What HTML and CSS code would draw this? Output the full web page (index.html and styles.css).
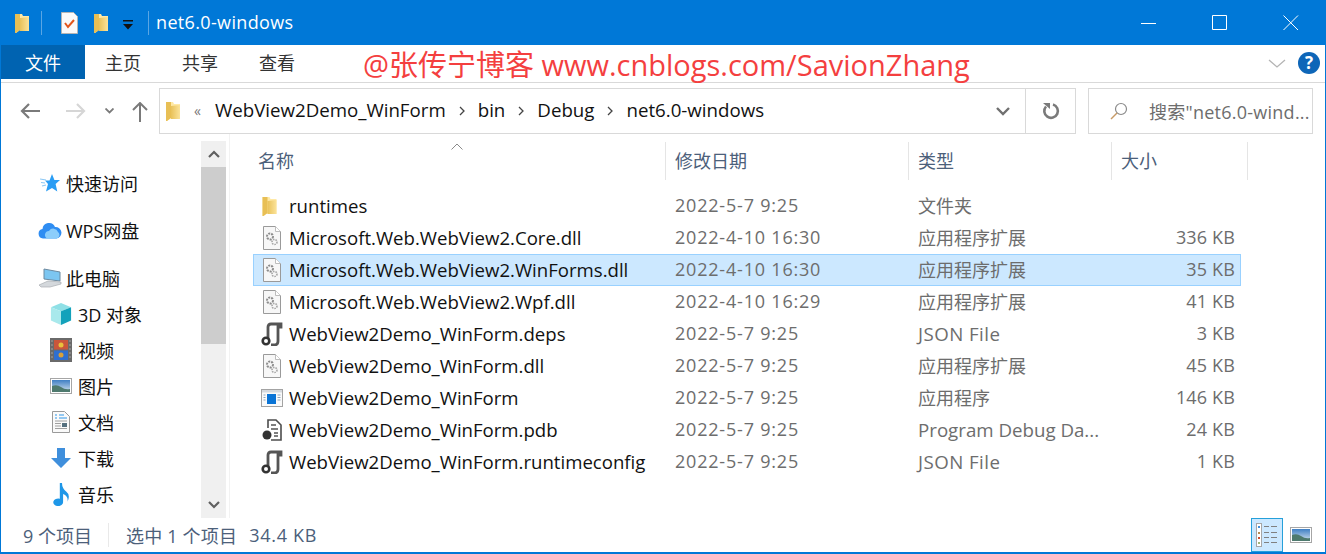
FILE: index.html
```html
<!DOCTYPE html>
<html lang="zh-CN">
<head>
    <meta charset="UTF-8">
    <title>net6.0-windows</title>
    <link rel="stylesheet" href="styles.css">
</head>
<body>
    <svg class="defs" width="0" height="0">
        <defs>
            <linearGradient id="fold" x1="0" y1="0" x2="1" y2="0">
                <stop offset="0" stop-color="#e9c25a"/>
                <stop offset="1" stop-color="#fbe39a"/>
            </linearGradient>
            <symbol id="folder" viewBox="0 0 14 20">
                <path d="M0 1h7l1 2h6v15H5v-1l-4 3H0z" fill="#ffe9a6"/>
                <path d="M0 1h5v16l-4 3H0z" fill="#e8bf55"/>
                <path d="M5 5l9-1v14H5z" fill="url(#fold)"/>
            </symbol>
            <symbol id="dll" viewBox="0 0 18 24">
                <path d="M.5.5h12l5 5v18H.5z" fill="#f7f7f7" stroke="#9a9a9a"/>
                <path d="M12.5.5v5h5" fill="#fff" stroke="#bdbdbd"/>
                <circle cx="7" cy="10.500" r="3" fill="none" stroke="#8c8c8c" stroke-width="2" stroke-dasharray="2 1"/>
                <circle cx="11.500" cy="16" r="2.500" fill="none" stroke="#a5a5a5" stroke-width="1.600" stroke-dasharray="1.500 1"/>
            </symbol>
            <symbol id="cfg" viewBox="0 0 22 24">
                <path d="M7 18V5q0-3 3-3h10v3h-3v14q0 4-4 4h-3" fill="none" stroke="#555" stroke-width="2.800"/>
                <circle cx="5" cy="19" r="3.300" fill="#fff" stroke="#333" stroke-width="2.600"/>
            </symbol>
            <symbol id="exe" viewBox="0 0 22 18">
                <rect x=".5" y=".5" width="21" height="17" fill="#fafafa" stroke="#a3a3a3"/>
                <rect x="1" y="1" width="20" height="2.500" fill="#d5d9de"/>
                <rect x="6" y="5" width="9" height="10" fill="#0a74d6"/>
                <path d="M2.500 6h2M2.500 8.500h2M2.500 11h2M16.500 6h3M16.500 8.500h3M16.500 11h3" stroke="#8fa5bb"/>
            </symbol>
            <symbol id="pdb" viewBox="0 0 20 22">
                <path d="M6 9V1h8l5 5v15H9" fill="#fff" stroke="#4d4d4d" stroke-width="1.600"/>
                <path d="M9 6h5M9 10h7M12 14h4M12 17h4" stroke="#555" stroke-width="1.500"/>
                <circle cx="5" cy="16" r="4.500" fill="#333"/>
            </symbol>
            <symbol id="star" viewBox="0 0 20 18">
                <path d="M12 0l2.400 6H20l-4.400 4 1.700 7.500L12 14l-6 3.500 2-7.500-3-3.500h4.500z" fill="#2a9df4"/>
                <path d="M0 5l6 1M1 8.500l4 .5M2 12l4-1" stroke="#8cc8f5" stroke-width="1.200"/>
            </symbol>
            <symbol id="cloud" viewBox="0 0 24 17">
                <path d="M5 16.500a4.800 4.800 0 0 1-.5-9.500A6.500 6.500 0 0 1 17 5a5.800 5.800 0 0 1 1.500 11.500z" fill="#2f8df2"/>
                <path d="M9 16.500a4 4 0 0 1 2-7.500 5 5 0 0 1 9 1 3.800 3.800 0 0 1-1 6.500z" fill="#8ccdfb"/>
            </symbol>
            <symbol id="pc" viewBox="0 0 24 20">
                <path d="M6 1l16 3v9L6 11z" fill="#7cc6f1" stroke="#6d8aa0"/>
                <path d="M1 17l9-4 13 1v2l-11 3H3z" fill="#d4d8dc" stroke="#a9adb1" stroke-width=".7"/>
            </symbol>
            <symbol id="cube" viewBox="0 0 24 24">
                <path d="M12 0l11 4.500L12 9 1 4.500z" fill="#8fe0e6"/>
                <path d="M1 4.500L12 9v15L1 19z" fill="#a9e9ec"/>
                <path d="M23 4.500L12 9v15l11-5z" fill="#13a2bb"/>
            </symbol>
            <symbol id="film" viewBox="0 0 22 24">
                <rect width="22" height="24" fill="#6a6a6a"/>
                <rect x="4" y="2" width="14" height="9.500" fill="#c9563b"/>
                <rect x="4" y="12.500" width="14" height="9.500" fill="#2f6fd0"/>
                <path d="M1.500 3h1M1.500 7h1M1.500 11h1M1.500 15h1M1.500 19h1M19.500 3h1M19.500 7h1M19.500 11h1M19.500 15h1M19.500 19h1" stroke="#ddd"/>
                <circle cx="11" cy="7" r="2.500" fill="#e8c13d"/>
                <circle cx="11" cy="17" r="2.500" fill="#d8a03a"/>
            </symbol>
            <linearGradient id="sky" x1="0" y1="0" x2="0" y2="1">
                <stop offset="0" stop-color="#3f7fc4"/>
                <stop offset="1" stop-color="#d4e3ee"/>
            </linearGradient>
            <symbol id="pic" viewBox="0 0 22 16">
                <rect x=".5" y=".5" width="21" height="15" fill="#fff" stroke="#a6a6a6"/>
                <rect x="2" y="2" width="18" height="12" fill="url(#sky)"/>
                <path d="M2 8q5-2 9 1t9 2v3H2z" fill="#4e7a6e"/>
            </symbol>
            <symbol id="doc" viewBox="0 0 18 22">
                <path d="M.5.5h12l5 5v16H.5z" fill="#fafafa" stroke="#9a9a9a"/>
                <path d="M3 4h2M3 7h2M7 4h5M7 7h8" stroke="#2f96e8" stroke-width="1.200"/>
                <path d="M3 10h12M3 12.500h6M3 15h6M3 17.500h12" stroke="#a0a0a0"/>
                <rect x="10" y="12" width="5" height="4" fill="#55707f"/>
            </symbol>
            <symbol id="down" viewBox="0 0 20 20">
                <path d="M6 0h8v10h6L10 20 0 10h6z" fill="#3f8fdc"/>
            </symbol>
            <symbol id="note" viewBox="0 0 16 22">
                <path d="M6 1h2q0 5 4 8t1 9q1-5-4-7v7.500a4.500 3.500 0 1 1-3-3.200z" fill="#1e97e8"/>
            </symbol>
        </defs>
    </svg>

    <div class="window">
        <div class="titlebar">
            <svg class="ic-folder"><use href="#folder"/></svg>
            <span class="tb-sep first"></span>
            <svg class="ic-check" viewBox="0 0 17 22">
                <path d="M.5.500h12l4 4v17H.5z" fill="#fafafa" stroke="#b5b5b5"/>
                <path d="M4 11l3 4 6-7" fill="none" stroke="#e2561c" stroke-width="2"/>
            </svg>
            <svg class="ic-folder second"><use href="#folder"/></svg>
            <svg class="ic-qa" viewBox="0 0 10 10">
                <path d="M0 0h10v1.500H0zM0 4h10L5 9.500z" fill="#111"/>
            </svg>
            <span class="tb-sep"></span>
            <span class="title">net6.0-windows</span>
            <div class="win-btns">
                <svg viewBox="0 0 16 16"><path d="M0 8.500h15" stroke="#fff"/></svg>
                <svg viewBox="0 0 16 16"><path d="M.5 .5h14v14H.5z" fill="none" stroke="#fff"/></svg>
                <svg viewBox="0 0 16 16"><path d="M.5 .5l14.500 14.500M15 .5L.5 15" stroke="#fff"/></svg>
            </div>
        </div>

        <div class="ribbon">
            <span class="tab tab-file">文件</span>
            <span class="tab">主页</span>
            <span class="tab">共享</span>
            <span class="tab">查看</span>
            <span class="mark">@张传宁博客 www.cnblogs.com/SavionZhang</span>
            <svg class="rb-chevron" viewBox="0 0 18 10"><path d="M1 1l8 7 8-7" fill="none" stroke="#b4b4b4" stroke-width="1.300"/></svg>
            <span class="help">?</span>
        </div>

        <div class="navbar">
            <svg class="nav back" viewBox="0 0 20 16"><path d="M9 1L2 8l7 7M2 8h18" fill="none" stroke="#7a7a7a" stroke-width="2.200"/></svg>
            <svg class="nav fwd" viewBox="0 0 20 16"><path d="M11 1l7 7-7 7M18 8H0" fill="none" stroke="#d6d6d6" stroke-width="2.200"/></svg>
            <svg class="nav recent" viewBox="0 0 9 6"><path d="M.5.500L4.500 4.500 8.500.500" fill="none" stroke="#7a7a7a" stroke-width="1.800"/></svg>
            <svg class="nav up" viewBox="0 0 16 20"><path d="M1 8l7-7 7 7M8 1v19" fill="none" stroke="#7a7a7a" stroke-width="2"/></svg>
            <div class="addr">
                <svg class="ic-folder"><use href="#folder"/></svg>
                <span class="crumb-more">«</span>
                <span class="crumb">WebView2Demo_WinForm</span>
                <svg class="crumb-sep" viewBox="0 0 6 10"><path d="M1 1l4 4-4 4" fill="none" stroke="#444" stroke-width="1.300"/></svg>
                <span class="crumb">bin</span>
                <svg class="crumb-sep" viewBox="0 0 6 10"><path d="M1 1l4 4-4 4" fill="none" stroke="#444" stroke-width="1.300"/></svg>
                <span class="crumb">Debug</span>
                <svg class="crumb-sep" viewBox="0 0 6 10"><path d="M1 1l4 4-4 4" fill="none" stroke="#444" stroke-width="1.300"/></svg>
                <span class="crumb">net6.0-windows</span>
                <svg class="addr-drop" viewBox="0 0 14 9"><path d="M1 1l6 6 6-6" fill="none" stroke="#707070" stroke-width="2.400"/></svg>
                <span class="addr-refresh">
                    <svg viewBox="0 0 18 18"><path d="M11 2.500A6.800 6.800 0 1 1 4 4.500" fill="none" stroke="#7a7a7a" stroke-width="2.600"/><path d="M1 1h7v6z" fill="#7a7a7a"/></svg>
                </span>
            </div>
            <div class="search">
                <svg viewBox="0 0 18 18"><circle cx="11" cy="7" r="5.500" fill="none" stroke="#8a8a8a" stroke-width="1.200"/><path d="M7 11l-6 6" stroke="#c79a66" stroke-width="1.500"/></svg>
                <span>搜索"net6.0-wind...</span>
            </div>
        </div>

        <div class="main">
            <div class="side">
                <div class="tree">
                    <div class="node top first-node"><svg class="i-star"><use href="#star"/></svg>快速访问</div>
                    <div class="node top gap"><svg class="i-cloud"><use href="#cloud"/></svg>WPS网盘</div>
                    <div class="node top gap wide"><svg class="i-pc"><use href="#pc"/></svg>此电脑</div>
                    <div class="node sub"><svg class="i-24"><use href="#cube"/></svg>3D 对象</div>
                    <div class="node sub"><svg class="i-24"><use href="#film"/></svg>视频</div>
                    <div class="node sub"><svg class="i-pic"><use href="#pic"/></svg>图片</div>
                    <div class="node sub"><svg class="i-doc"><use href="#doc"/></svg>文档</div>
                    <div class="node sub"><svg class="i-down"><use href="#down"/></svg>下载</div>
                    <div class="node sub"><svg class="i-note"><use href="#note"/></svg>音乐</div>
                </div>
                <div class="scroll">
                    <span class="sc-btn"><svg viewBox="0 0 12 8"><path d="M1 7l5-5 5 5" fill="none" stroke="#606060" stroke-width="2.200"/></svg></span>
                    <span class="sc-thumb"></span>
                    <span class="sc-btn end"><svg viewBox="0 0 12 8"><path d="M1 1l5 5 5-5" fill="none" stroke="#606060" stroke-width="2.200"/></svg></span>
                </div>
            </div>

            <div class="files">
                <div class="head">
                    <span class="col-name">名称<svg class="sort" viewBox="0 0 12 7"><path d="M.5 6.500L6 1l5.500 5.500" fill="none" stroke="#8a8a8a"/></svg></span>
                    <span class="col-date">修改日期</span>
                    <span class="col-type">类型</span>
                    <span class="col-size">大小</span>
                </div>
                <div class="row">
                    <span class="col-name"><span class="f-ic"><svg class="i-fold"><use href="#folder"/></svg></span>runtimes</span>
                    <span class="col-date">2022-5-7 9:25</span><span class="col-type">文件夹</span><span class="col-size"></span>
                </div>
                <div class="row">
                    <span class="col-name"><span class="f-ic"><svg class="i-dll"><use href="#dll"/></svg></span>Microsoft.Web.WebView2.Core.dll</span>
                    <span class="col-date">2022-4-10 16:30</span><span class="col-type">应用程序扩展</span><span class="col-size">336 KB</span>
                </div>
                <div class="row selected">
                    <span class="col-name"><span class="f-ic"><svg class="i-dll"><use href="#dll"/></svg></span>Microsoft.Web.WebView2.WinForms.dll</span>
                    <span class="col-date">2022-4-10 16:30</span><span class="col-type">应用程序扩展</span><span class="col-size">35 KB</span>
                </div>
                <div class="row">
                    <span class="col-name"><span class="f-ic"><svg class="i-dll"><use href="#dll"/></svg></span>Microsoft.Web.WebView2.Wpf.dll</span>
                    <span class="col-date">2022-4-10 16:29</span><span class="col-type">应用程序扩展</span><span class="col-size">41 KB</span>
                </div>
                <div class="row">
                    <span class="col-name"><span class="f-ic"><svg class="i-cfg"><use href="#cfg"/></svg></span>WebView2Demo_WinForm.deps</span>
                    <span class="col-date">2022-5-7 9:25</span><span class="col-type latin json">JSON File</span><span class="col-size">3 KB</span>
                </div>
                <div class="row">
                    <span class="col-name"><span class="f-ic"><svg class="i-dll"><use href="#dll"/></svg></span>WebView2Demo_WinForm.dll</span>
                    <span class="col-date">2022-5-7 9:25</span><span class="col-type">应用程序扩展</span><span class="col-size">45 KB</span>
                </div>
                <div class="row">
                    <span class="col-name"><span class="f-ic"><svg class="i-exe"><use href="#exe"/></svg></span>WebView2Demo_WinForm</span>
                    <span class="col-date">2022-5-7 9:25</span><span class="col-type">应用程序</span><span class="col-size">146 KB</span>
                </div>
                <div class="row">
                    <span class="col-name"><span class="f-ic"><svg class="i-pdb"><use href="#pdb"/></svg></span>WebView2Demo_WinForm.pdb</span>
                    <span class="col-date">2022-5-7 9:25</span><span class="col-type latin">Program Debug Da...</span><span class="col-size">24 KB</span>
                </div>
                <div class="row">
                    <span class="col-name"><span class="f-ic"><svg class="i-cfg"><use href="#cfg"/></svg></span>WebView2Demo_WinForm.runtimeconfig</span>
                    <span class="col-date">2022-5-7 9:25</span><span class="col-type latin json">JSON File</span><span class="col-size">1 KB</span>
                </div>
            </div>
        </div>

        <div class="status">
            <span class="st-count">9 个项目</span>
            <span class="st-sep"></span>
            <span class="st-sel">选中 1 个项目</span>
            <span class="st-size">34.4 KB</span>
            <div class="views">
                <span class="view active">
                    <svg viewBox="0 0 22 24">
                        <rect x=".5" y=".5" width="5" height="23" fill="#fff" stroke="#a6a6a6"/>
                        <path d="M2 3h2v2H2z" fill="#3f8fdc"/><path d="M2 9h2v2H2z" fill="#b58a55"/><path d="M2 14h2v2H2z" fill="#d24a2c"/><path d="M2 19h2v2H2z" fill="#9fb37a"/>
                        <path d="M8 3.500h5M15 3.500h6M8 9.500h5M15 9.500h6M8 14.500h5M15 14.500h6M8 19.500h5M15 19.500h6" stroke="#808080" stroke-width="1.200"/>
                    </svg>
                </span>
                <svg class="view-large"><use href="#pic"/></svg>
            </div>
        </div>
    </div>
</body>
</html>
```

FILE: styles.css
```css
* {
    box-sizing: border-box;
}
body {
    margin: 0;
    background: #fff;
    font-family: "Open Sans", "Noto Sans CJK SC", sans-serif;
    font-size: 18px;
    color: #111;
}
svg {
    display: block;
    flex: none;
}
.defs {
    position: absolute;
}
.window {
    width: 1326px;
    height: 554px;
    display: flex;
    flex-direction: column;
    border-left: 1px solid #0078d7;
    border-right: 1px solid #0078d7;
    border-bottom: 2px solid #0078d7;
    overflow: hidden;
}

/* title bar */
.titlebar {
    height: 45px;
    flex: none;
    margin-left: -1px;
    background: #0078d7;
    display: flex;
    align-items: center;
    color: #fff;
}
.ic-folder {
    width: 14px;
    height: 20px;
    margin-left: 15px;
}
.ic-folder.second {
    margin-left: 16px;
}
.tb-sep {
    width: 1px;
    height: 24px;
    margin-left: 15px;
    background: #5aa6e4;
}
.tb-sep.first {
    margin-left: 12px;
}
.ic-check {
    width: 17px;
    height: 22px;
    margin-left: 19px;
}
.ic-qa {
    width: 10px;
    height: 10px;
    margin: 4px 0 0 15px;
}
.title {
    margin: -2px 0 0 7px;
    letter-spacing: .35px;
}
.win-btns {
    margin-left: auto;
    display: flex;
    gap: 55px;
    padding-right: 26px;
}
.win-btns svg {
    width: 16px;
    height: 16px;
}

/* ribbon */
.ribbon {
    height: 38px;
    flex: none;
    display: flex;
    align-items: flex-start;
    border-bottom: 1px solid #d9d9d9;
}
.tab {
    height: 34px;
    margin-right: 41px;
    line-height: 36px;
    color: #333;
}
.tab:nth-child(2) {
    margin-left: 20px;
}
.tab-file {
    width: 84px;
    margin: 0;
    text-align: center;
    background: #0063b1;
    color: #fff;
}
.mark {
    margin-left: 27px;
    height: 34px;
    line-height: 40px;
    font-size: 29px;
    color: #f43f3f;
    white-space: nowrap;
}
.rb-chevron {
    width: 18px;
    height: 10px;
    margin: 14px 0 0 auto;
}
.help {
    width: 22px;
    height: 22px;
    margin: 7px 5px 0 12px;
    border-radius: 50%;
    background: #0e66b8;
    color: #fff;
    font-size: 17px;
    font-weight: 700;
    line-height: 22px;
    text-align: center;
}

/* address row */
.navbar {
    height: 51px;
    flex: none;
    padding: 5px 12px 0 19px;
    display: flex;
    align-items: flex-start;
}
.nav.back {
    width: 20px;
    height: 16px;
    margin-top: 15px;
}
.nav.fwd {
    width: 20px;
    height: 16px;
    margin: 15px 0 0 26px;
}
.nav.recent {
    width: 9px;
    height: 6px;
    margin: 20px 0 0 19px;
}
.nav.up {
    width: 16px;
    height: 20px;
    margin: 14px 0 0 18px;
}
.addr {
    width: 917px;
    height: 46px;
    margin-left: 11px;
    display: flex;
    align-items: center;
    border: 1px solid #d9d9d9;
}
.addr .ic-folder {
    margin-left: 6px;
}
.crumb-more {
    margin: -2px 14px 0 14px;
    font-size: 14px;
    color: #777;
}
.crumb {
    margin-top: -4px;
    font-size: 18.7px;
    white-space: nowrap;
}
.crumb-sep {
    width: 6px;
    height: 10px;
    margin: 0 13px;
}
.addr-drop {
    width: 14px;
    height: 9px;
    margin-left: auto;
}
.addr-refresh {
    width: 50px;
    height: 44px;
    margin-left: 15px;
    border-left: 1px solid #d9d9d9;
    display: flex;
    align-items: center;
    justify-content: center;
}
.addr-refresh svg {
    width: 18px;
    height: 18px;
}
.search {
    width: 225px;
    height: 46px;
    margin-left: 12px;
    padding-left: 21px;
    display: flex;
    align-items: center;
    gap: 21px;
    border: 1px solid #d9d9d9;
    color: #6d6d6d;
    white-space: nowrap;
    letter-spacing: .25px;
}
.search svg {
    width: 18px;
    height: 18px;
}

/* sidebar + list */
.main {
    flex: 1;
    min-height: 0;
    display: flex;
}
.side {
    width: 229px;
    flex: none;
    padding-top: 7px;
    display: flex;
    border-right: 1px solid #f2f2f2;
}
.tree {
    width: 200px;
    flex: none;
}
.node {
    height: 36px;
    display: flex;
    align-items: center;
}
.top {
    padding-left: 65px;
    position: relative;
}
.first-node {
    margin-top: 24px;
}
.gap {
    margin-top: 11px;
}
.gap.wide {
    margin-top: 12px;
}
.sub {
    padding-left: 77px;
}
.i-star {
    position: absolute;
    left: 39px;
    width: 20px;
    height: 18px;
}
.i-cloud {
    position: absolute;
    left: 37px;
    width: 24px;
    height: 17px;
}
.i-pc {
    position: absolute;
    left: 37px;
    width: 24px;
    height: 20px;
}
.i-24 {
    width: 22px;
    height: 24px;
    margin: 0 6px 0 -28px;
}
.i-pic {
    width: 22px;
    height: 16px;
    margin: 0 6px 0 -28px;
}
.i-doc {
    width: 18px;
    height: 22px;
    margin: 0 8px 0 -26px;
}
.i-down {
    width: 20px;
    height: 20px;
    margin: 0 7px 0 -27px;
}
.i-note {
    width: 18px;
    height: 24px;
    margin: 0 7px 0 -25px;
}
.scroll {
    width: 25px;
    height: 377px;
    background: #f0f0f0;
    display: flex;
    flex-direction: column;
}
.sc-btn {
    height: 26px;
    display: flex;
    align-items: center;
    justify-content: center;
}
.sc-btn svg {
    width: 12px;
    height: 8px;
}
.sc-btn.end {
    margin-top: auto;
}
.sc-thumb {
    height: 177px;
    background: #cdcdcd;
}
.files {
    flex: 1;
    padding-left: 17px;
}
.head {
    display: flex;
    height: 56px;
    padding-top: 8px;
    color: #4c607a;
}
.head > span {
    height: 38px;
    line-height: 38px;
    padding-left: 9px;
    border-right: 1px solid #e5e5e5;
    position: relative;
}
.head .col-name {
    width: 419px;
    padding-left: 11px;
}
.head .col-date {
    width: 243px;
}
.head .col-type {
    width: 203px;
}
.head .col-size {
    width: 136px;
}
.sort {
    position: absolute;
    left: 204px;
    top: 1px;
    width: 12px;
    height: 7px;
}
.row {
    height: 32px;
    padding-bottom: 2px;
    display: flex;
    align-items: center;
    color: #6d6d6d;
    white-space: nowrap;
    border: 1px solid transparent;
    margin-left: 6px;
    width: 988px;
}
.row.selected {
    background: #cce8ff;
    border-color: #99d1ff;
}
.row .col-name {
    width: 421px;
    display: flex;
    align-items: center;
    font-size: 18.6px;
    color: #111;
}
.f-ic {
    width: 35px;
    margin-top: 2px;
    display: flex;
    justify-content: center;
}
.i-fold {
    width: 15px;
    height: 20px;
    margin-right: 4px;
}
.i-dll {
    width: 18px;
    height: 24px;
}
.i-cfg {
    width: 22px;
    height: 24px;
}
.i-exe {
    width: 22px;
    height: 18px;
}
.i-pdb {
    width: 20px;
    height: 22px;
}
.row .col-date {
    width: 243px;
    letter-spacing: .8px;
}
.row .col-type {
    width: 203px;
}
.row .latin {
    font-size: 18.7px;
}
.row .json {
    letter-spacing: .45px;
}
.row .col-size {
    width: 114px;
    text-align: right;
    letter-spacing: .15px;
}

/* status bar */
.status {
    height: 34px;
    flex: none;
    display: flex;
    align-items: center;
    padding-left: 22px;
    color: #4c607a;
}
.st-sep {
    width: 1px;
    height: 24px;
    margin: 0 17px 0 16px;
    background: #e9e9e9;
}
.st-sel {
    letter-spacing: .2px;
}
.st-size {
    margin-left: 12px;
    letter-spacing: .7px;
}
.views {
    margin-left: auto;
    display: flex;
    align-items: center;
    gap: 7px;
    padding-right: 13px;
}
.view {
    width: 32px;
    height: 34px;
    display: flex;
    align-items: center;
    justify-content: center;
    background: #cce8ff;
    border: 1px solid #26a0da;
}
.view svg {
    width: 22px;
    height: 24px;
}
.view-large {
    width: 22px;
    height: 16px;
}
```
